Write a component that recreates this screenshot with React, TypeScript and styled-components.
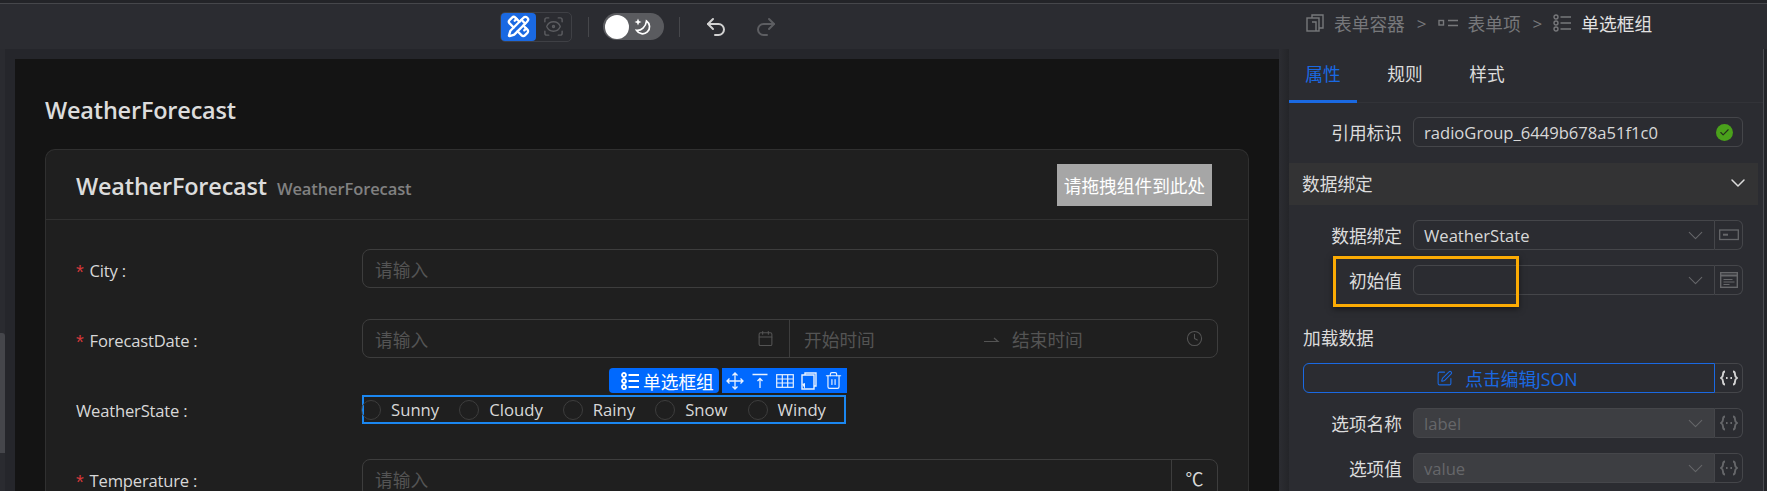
import React from "react";
import styled, { createGlobalStyle } from "styled-components";
import { PencilRuler, ScanEye, Undo2, Redo2, Check, ChevronDown, SquarePen, Calendar, Clock, Trash2 } from "lucide-react";

const Global = createGlobalStyle`
  html, body { margin: 0; padding: 0; background: #2b2c31; overflow: hidden; }
  * { box-sizing: border-box; }
  body { font-family: "Open Sans", "Noto Sans CJK SC", sans-serif; font-size: 17.7px; color: #d8d8d8; }
`;

const Shell = styled.div`
  width: 1767px; height: 491px; overflow: hidden; display: flex; flex-direction: column; background: #232428;
`;
const TopBar = styled.header`
  height: 46px; flex: none; display: flex; background: #2b2c31; border-top: 1px solid #46474b; margin-top: 3px;
`;
const Tools = styled.div`
  width: 1289px; height: 100%; flex: none; display: flex; align-items: center; padding: 0 0 0 500px;
`;
const ModeGroup = styled.div`
  width: 72px; height: 30px; border: 1px solid #3f4045; border-radius: 5px; display: flex; align-items: center;
`;
const ModeBtn = styled.div<{ $on?: boolean }>`
  width: 35px; height: 28px; border-radius: 4px; display: flex; align-items: center; justify-content: center;
  background: ${p => (p.$on ? "#1a69e2" : "transparent")}; color: ${p => (p.$on ? "#fff" : "#5b5c60")};
`;
const VLine = styled.div<{ $ml: number; $mr: number }>`
  width: 1px; height: 20px; background: #46474b; margin: 0 ${p => p.$mr}px 0 ${p => p.$ml}px;
`;
const Toggle = styled.div`
  width: 61px; height: 27px; border-radius: 14px; background: #5a5b5f; display: flex; align-items: center; justify-content: space-between; padding: 0 11px 0 2px; color: #fff;
`;
const Knob = styled.div`
  width: 24px; height: 24px; border-radius: 50%; background: #fff;
`;
const HistoryBtn = styled.div<{ $dim?: boolean; $ml: number }>`
  display: flex; margin-left: ${p => p.$ml}px; color: ${p => (p.$dim ? "#5d5e62" : "#d2d2d2")};
`;
const Crumbs = styled.nav`
  flex: 1; display: flex; align-items: center; padding: 0 0 7px 17px; color: #77787b;
`;
const CrumbItem = styled.span<{ $on?: boolean }>`
  display: flex; align-items: center; gap: 10px; color: ${p => (p.$on ? "#e2e2e2" : "#77787b")};
`;
const CrumbIcon = styled.span`
  display: flex; color: #77787b;
`;
const CrumbSep = styled.span`
  margin: 0 11px 0 12px; font-size: 17px; color: #77787b;
`;

const Main = styled.main`
  flex: 1; min-height: 0; display: flex;
`;
const CanvasArea = styled.section`
  position: relative; width: 1289px; flex: none; padding: 10px 10px 0 15px; overflow: hidden;
  background: linear-gradient(90deg, #2a2b30 0, #2a2b30 5px, #25262b 5px, #25262b 1279px, #2c2d32 1279px, #242529 1289px);
`;
const ScrollThumb = styled.div`
  position: absolute; left: 0; top: 284px; width: 5px; height: 120px; background: #45464b; border-radius: 0 3px 0 0;
`;
const Page = styled.div`
  height: 100%; background: #141414; padding-left: 30px; overflow: hidden;
`;
const PageTitle = styled.h1`
  margin: 36px 0 24px; height: 30px; line-height: 30px; font-size: 23.5px; font-weight: 600; color: #dcdcdc; letter-spacing: -0.2px;
`;
const Card = styled.div`
  width: 1204px; background: #1f1f1f; border: 1px solid #303030; border-radius: 10px 10px 0 0; border-bottom: 0; height: 400px;
`;
const CardHead = styled.div`
  height: 70px; border-bottom: 1px solid #303030; display: flex; align-items: center; justify-content: space-between; padding: 0 36px 0 30px;
`;
const CardTitle = styled.div`
  display: flex; align-items: baseline; gap: 10px; font-size: 23.5px; font-weight: 600; color: #dcdcdc; letter-spacing: -0.2px; padding-top: 3px;
`;
const CardSub = styled.span`
  font-size: 16.5px; color: #818181; letter-spacing: -0.1px;
`;
const DropHint = styled.div`
  width: 155px; height: 42px; background: #a6a6a6; color: #fff; display: flex; align-items: center; justify-content: center; white-space: nowrap;
`;
const Form = styled.div`
  padding: 29px 30px 0 30px; display: flex; flex-direction: column; gap: 31px;
`;
const FormRow = styled.div`
  display: flex; height: 39px;
`;
const FormLabel = styled.label`
  width: 286px; flex: none; display: flex; align-items: center; font-size: 16.6px; letter-spacing: -0.2px; color: #d8d8d8; padding-top: 3px;
`;
const Star = styled.span`
  color: #d5383a; font-size: 20px; line-height: 1; font-family: "Liberation Sans", sans-serif; padding-top: 3px; margin-right: 6px;
`;
const Colon = styled.span`
  margin-left: 4px;
`;
const Field = styled.div<{ $split?: boolean }>`
  flex: 1; min-width: 0; height: 39px; border: 1px solid #3d3d3d; border-radius: 8px; display: flex; align-items: center; padding: ${p => (p.$split ? "0 0 0 12px" : "0 12px")}; color: #545454;
`;
const DatePart = styled.div`
  display: flex; align-items: center; justify-content: space-between; height: 100%; width: 415px; flex: none; padding-right: 15px; border-right: 1px solid #3d3d3d; color: #545454;
`;
const TimePart = styled.div`
  flex: 1; min-width: 0; display: flex; align-items: center; height: 100%; padding-left: 14px;
`;
const TimeText = styled.span<{ $w: number; $ml?: number }>`
  width: ${p => p.$w}px; margin-left: ${p => p.$ml || 0}px;
`;
const Unit = styled.div`
  width: 46px; height: 100%; margin-right: -12px; margin-left: auto; border-left: 1px solid #3d3d3d; display: flex; align-items: center; justify-content: center; color: #d8d8d8; font-size: 18px; padding-bottom: 2px;
`;
const RadioBox = styled.div`
  position: relative; width: 484px; height: 29px; margin-top: 6px; border: 2px solid #1b87f0; display: flex; align-items: center; gap: 20px;
`;
const RadioItem = styled.span`
  display: flex; align-items: center; gap: 10px; font-size: 16.7px; color: #d8d8d8; white-space: nowrap;
  &:first-of-type { margin-left: -3px; }
`;
const RadioDot = styled.i`
  width: 20px; height: 20px; border: 1px solid #3d3d3d; border-radius: 50%; display: block;
`;
const TagName = styled.div`
  position: absolute; left: 245px; top: -29px; width: 110px; height: 25px; background: #0069fe; border-radius: 4px; color: #fff; display: flex; align-items: center; gap: 4px; padding-left: 12px; white-space: nowrap;
`;
const TagTools = styled.div`
  position: absolute; left: 358px; top: -29px; width: 125px; height: 25px; background: #0069fe; color: #e8f1ff; display: flex; align-items: center; gap: 7px; padding-left: 4px;
`;

const Panel = styled.aside`
  flex: 1; background: #2b2c31; border-right: 1px solid #4a4b50; margin-right: 3px; display: flex; flex-direction: column;
`;
const Tabs = styled.div`
  height: 54px; flex: none; display: flex; border-bottom: 1px solid #323338;
`;
const Tab = styled.div<{ $on?: boolean }>`
  width: 68px; margin-right: 14px; height: 54px; display: flex; align-items: center; justify-content: center; padding-bottom: 4px;
  color: ${p => (p.$on ? "#1a69e2" : "#dcdcdc")}; border-bottom: 3px solid ${p => (p.$on ? "#1a69e2" : "transparent")};
`;
const PRow = styled.div<{ $mt: number }>`
  position: relative; display: flex; align-items: center; height: 30px; margin-top: ${p => p.$mt}px; padding-right: 20px;
`;
const PLabel = styled.label`
  width: 113px; margin-right: 11px; flex: none; text-align: right; color: #dcdcdc;
`;
const Box = styled.div<{ $dis?: boolean; $end?: boolean }>`
  flex: 1; min-width: 0; height: 100%; display: flex; align-items: center; justify-content: space-between; padding: 0 ${p => (p.$end ? "10px" : "6px")} 0 10px; font-size: 16.6px;
  border: 1px solid #45464a; border-radius: ${p => (p.$end ? "6px" : "6px 0 0 6px")};
  background: ${p => (p.$dis ? "#3d3e42" : "transparent")}; color: ${p => (p.$dis ? "#66676a" : "#d8d8d8")};
`;
const Addon = styled.div<{ $dis?: boolean; $muted?: boolean }>`
  width: 28px; height: 100%; flex: none; display: flex; align-items: center; justify-content: center; border: 1px solid #45464a; border-left: 0; border-radius: 0 6px 6px 0;
  color: ${p => (p.$dis || p.$muted ? "#66676a" : "#d4d4d4")}; background: ${p => (p.$dis ? "#2b2c31" : "transparent")};
`;
const CheckBadge = styled.span`
  width: 17px; height: 17px; border-radius: 50%; background: #4aa11b; color: #23301c; display: flex; align-items: center; justify-content: center; margin-right: -1px;
`;
const Section = styled.div`
  height: 42px; margin: 16px 5px 0 0; background: #333334; display: flex; align-items: center; justify-content: space-between; padding: 0 8px 2px 13px; color: #dcdcdc;
`;
const SubHead = styled.div`
  margin: 30px 0 0 14px; height: 26px; line-height: 26px; color: #dcdcdc;
`;
const JsonRow = styled.div`
  display: flex; height: 30px; margin: 12px 20px 0 14px;
`;
const JsonBtn = styled.div`
  flex: 1; display: flex; align-items: center; justify-content: center; gap: 12px; border: 1px solid #1a69e2; border-radius: 6px 0 0 6px; color: #1a69e2; padding-right: 4px;
`;
const Marker = styled.div`
  position: absolute; left: 44px; top: -9px; width: 186px; height: 51px; border: 3px solid #fbab04; box-shadow: 0 2px 6px rgba(0,0,0,.5);
`;

const ListIcon = ({ size = 18, color = "currentColor", w = 1.4 }: { size?: number; color?: string; w?: number }) => (
  <svg width={size} height={size} viewBox="0 0 18 18" fill="none" stroke={color} strokeWidth={w}>
    <circle cx="3" cy="3" r="2" /><circle cx="3" cy="9" r="2" /><circle cx="3" cy="15" r="2" />
    <path d="M7.5 3H18M7.5 9H18M7.5 15H18" />
  </svg>
);
const ContainerIcon = () => (
  <svg width="18" height="18" viewBox="0 0 18 18" fill="none" stroke="currentColor" strokeWidth="1.4">
    <path d="M6 4V1h11v13h-4" /><rect x="1" y="4" width="12" height="13" />
    <path d="M6 8h4v9" />
  </svg>
);
const ItemIcon = () => (
  <svg width="20" height="10" viewBox="0 0 20 10" fill="none" stroke="currentColor" strokeWidth="1.4">
    <rect x="1" y="2.5" width="4.5" height="4.5" /><path d="M10 2.5h10M10 7.5h10" />
  </svg>
);
const BracesIcon = () => (
  <svg width="18" height="16" viewBox="0 0 18 16" fill="none" stroke="currentColor" strokeWidth="1.9">
    <path d="M5 1.5C3 1.5 3 3 3 4.5S3 7 1 8c2 1 2 2 2 3.5s0 3 2 3" />
    <path d="M13 1.5c2 0 2 1.5 2 3S15 7 17 8c-2 1-2 2-2 3.5s0 3-2 3" />
    <path d="M6 8h1.6M10.4 8H12" strokeWidth="2" />
  </svg>
);
const BindIcon = () => (
  <svg width="20" height="12" viewBox="0 0 20 12" fill="none" stroke="currentColor" strokeWidth="1.3">
    <rect x=".7" y="1" width="18.6" height="9.5" /><path d="M4 5.7h5" strokeWidth="2" />
  </svg>
);
const InitIcon = () => (
  <svg width="18" height="16" viewBox="0 0 18 16" fill="none" stroke="currentColor" strokeWidth="1.4">
    <rect x=".7" y=".7" width="16.6" height="14.6" /><path d="M1 3.5h16" strokeWidth="2" /><path d="M3.5 7.5h9M3.5 10h11M3.5 12.5h6" strokeWidth="1.1" />
  </svg>
);
const Arrow = () => (
  <svg width="16" height="8" viewBox="0 0 16 8" fill="none" stroke="#545454" strokeWidth="1.2">
    <path d="M0 6.5h14L10 3" />
  </svg>
);
const MoveIcon = () => (
  <svg width="18" height="18" viewBox="0 0 18 18" fill="none" stroke="currentColor" strokeWidth="1.3">
    <path d="M1 9h16M9 1v16M3.5 6.5 1 9l2.5 2.5M14.5 6.5 17 9l-2.5 2.5M6.5 3.5 9 1l2.5 2.5M6.5 14.5 9 17l2.5-2.5" />
  </svg>
);
const TopIcon = () => (
  <svg width="18" height="18" viewBox="0 0 18 18" fill="none" stroke="currentColor" strokeWidth="1.3">
    <path d="M1.5 2.5h15M9 6.5V16M6.5 9 9 6.5 11.5 9" />
  </svg>
);
const GridIcon = () => (
  <svg width="18" height="14" viewBox="0 0 18 14" fill="none" stroke="currentColor" strokeWidth="1.2">
    <rect x=".7" y=".7" width="16.6" height="12.6" /><path d="M1 5h16M1 9h16M6.3 1v12M11.7 1v12" />
  </svg>
);
const PagesIcon = () => (
  <svg width="16" height="18" viewBox="0 0 16 18" fill="none" stroke="currentColor" strokeWidth="1.4">
    <path d="M4 3V1h11v13h-2" /><path d="M5 3H1v14h12V3H5Z" /><path d="M1 12l3-1v6" fill="currentColor" stroke="none" />
  </svg>
);
const MoonIcon = () => (
  <svg width="20" height="20" viewBox="0 0 20 20" fill="none" stroke="currentColor" strokeWidth="1.7">
    <path d="M13.5 4a7 7 0 1 1-10 9.3c4.6.7 9.4-3.6 10-9.3Z" />
    <path d="M5 1.5 6 4l2.5 1L6 6 5 8.5 4 6 1.5 5 4 4Z" fill="currentColor" stroke="none" />
  </svg>
);

export default function App() {
  return (
    <Shell>
      <Global />
      <TopBar>
        <Tools>
          <ModeGroup>
            <ModeBtn $on><PencilRuler size={23} strokeWidth={2.4} /></ModeBtn>
            <ModeBtn><ScanEye size={23} strokeWidth={1.5} /></ModeBtn>
          </ModeGroup>
          <VLine $ml={16} $mr={14} />
          <Toggle><Knob /><MoonIcon /></Toggle>
          <VLine $ml={15} $mr={0} />
          <HistoryBtn $ml={24}><Undo2 size={24} strokeWidth={2} /></HistoryBtn>
          <HistoryBtn $dim $ml={26}><Redo2 size={24} strokeWidth={2} /></HistoryBtn>
        </Tools>
        <Crumbs>
          <CrumbItem><ContainerIcon />表单容器</CrumbItem>
          <CrumbSep>&gt;</CrumbSep>
          <CrumbItem><ItemIcon />表单项</CrumbItem>
          <CrumbSep>&gt;</CrumbSep>
          <CrumbItem $on><CrumbIcon><ListIcon /></CrumbIcon>单选框组</CrumbItem>
        </Crumbs>
      </TopBar>
      <Main>
        <CanvasArea>
          <ScrollThumb />
          <Page>
            <PageTitle>WeatherForecast</PageTitle>
            <Card>
              <CardHead>
                <CardTitle>WeatherForecast<CardSub>WeatherForecast</CardSub></CardTitle>
                <DropHint>请拖拽组件到此处</DropHint>
              </CardHead>
              <Form>
                <FormRow>
                  <FormLabel><Star>*</Star>City<Colon>:</Colon></FormLabel>
                  <Field>请输入</Field>
                </FormRow>
                <FormRow>
                  <FormLabel><Star>*</Star>ForecastDate<Colon>:</Colon></FormLabel>
                  <Field $split>
                    <DatePart>请输入<Calendar size={17} strokeWidth={1.5} /></DatePart>
                    <TimePart>
                      <TimeText $w={180}>开始时间</TimeText>
                      <Arrow />
                      <TimeText $w={174} $ml={12}>结束时间</TimeText>
                      <Clock size={17} strokeWidth={1.5} />
                    </TimePart>
                  </Field>
                </FormRow>
                <FormRow>
                  <FormLabel>WeatherState<Colon>:</Colon></FormLabel>
                  <RadioBox>
                    <TagName><ListIcon size={18} color="#fff" w={1.8} />单选框组</TagName>
                    <TagTools>
                      <MoveIcon />
                      <TopIcon />
                      <GridIcon />
                      <PagesIcon />
                      <Trash2 size={19} strokeWidth={1.5} />
                    </TagTools>
                    {["Sunny", "Cloudy", "Rainy", "Snow", "Windy"].map(t => (
                      <RadioItem key={t}><RadioDot />{t}</RadioItem>
                    ))}
                  </RadioBox>
                </FormRow>
                <FormRow>
                  <FormLabel><Star>*</Star>Temperature<Colon>:</Colon></FormLabel>
                  <Field>请输入<Unit>℃</Unit></Field>
                </FormRow>
              </Form>
            </Card>
          </Page>
        </CanvasArea>
        <Panel>
          <Tabs>
            <Tab $on>属性</Tab>
            <Tab>规则</Tab>
            <Tab>样式</Tab>
          </Tabs>
          <PRow $mt={14}>
            <PLabel>引用标识</PLabel>
            <Box $end>radioGroup_6449b678a51f1c0<CheckBadge><Check size={11} strokeWidth={2.5} /></CheckBadge></Box>
          </PRow>
          <Section>数据绑定<ChevronDown size={24} strokeWidth={1.5} /></Section>
          <PRow $mt={15}>
            <PLabel>数据绑定</PLabel>
            <Box>WeatherState<ChevronDown size={25} strokeWidth={1} color="#66676a" /></Box>
            <Addon $muted><BindIcon /></Addon>
          </PRow>
          <PRow $mt={15}>
            <Marker />
            <PLabel>初始值</PLabel>
            <Box><span /><ChevronDown size={25} strokeWidth={1} color="#66676a" /></Box>
            <Addon $muted><InitIcon /></Addon>
          </PRow>
          <SubHead>加载数据</SubHead>
          <JsonRow>
            <JsonBtn><SquarePen size={17} strokeWidth={1.5} />点击编辑JSON</JsonBtn>
            <Addon><BracesIcon /></Addon>
          </JsonRow>
          <PRow $mt={15}>
            <PLabel>选项名称</PLabel>
            <Box $dis>label<ChevronDown size={25} strokeWidth={1} /></Box>
            <Addon $dis><BracesIcon /></Addon>
          </PRow>
          <PRow $mt={15}>
            <PLabel>选项值</PLabel>
            <Box $dis>value<ChevronDown size={25} strokeWidth={1} /></Box>
            <Addon $dis><BracesIcon /></Addon>
          </PRow>
        </Panel>
      </Main>
    </Shell>
  );
}
